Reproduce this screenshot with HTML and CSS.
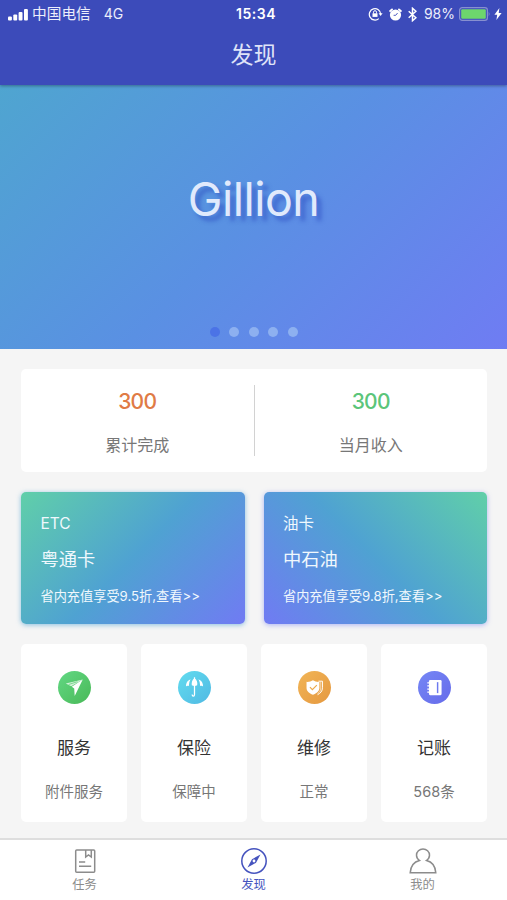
FILE: index.html
```html
<!DOCTYPE html>
<html lang="zh-CN">
<head>
  <meta charset="UTF-8">
  <meta name="viewport" content="width=device-width, initial-scale=1.0">
  <title>发现</title>
  <link rel="stylesheet" href="styles.css">
</head>
<body>

  <header>
    <div class="status-bar">
      <div class="status-left">
        <svg class="signal" width="21" height="13" viewBox="0 0 21 13" fill="#fff">
          <rect x="0" y="8.5" width="3.9" height="4" rx="1"/>
          <rect x="5.3" y="6.5" width="3.9" height="6" rx="1"/>
          <rect x="10.6" y="4" width="3.9" height="8.5" rx="1"/>
          <rect x="16" y="1" width="3.9" height="11.5" rx="1"/>
        </svg>
        <span class="carrier">中国电信</span>
        <span class="network">4G</span>
      </div>
      <div class="time">15:34</div>
      <div class="status-right">
        <svg class="lock" width="15" height="14" viewBox="0 0 15 14" fill="none" stroke="#fff" stroke-width="1.2">
          <path d="M10.8 11.6A5.7 5.7 0 1 1 12.7 7"/>
          <path d="M10.6 6.2h4l-2 2.800z" fill="#fff" stroke="none"/>
          <rect x="4.5" y="6.3" width="5" height="3.6" fill="#fff" stroke="none"/>
          <path d="M5.5 6.5V5.2a1.5 1.5 0 0 1 3 0v1.3" stroke-width="1"/>
        </svg>
        <svg class="alarm" width="13" height="13" viewBox="0 0 13 13">
          <circle cx="6.5" cy="7" r="5.6" fill="#fff"/>
          <path d="M1.200 3L3 1.400M11.800 3L10 1.400" stroke="#fff" stroke-width="1.9" stroke-linecap="round"/>
          <path d="M6.700 7.300L8.600 5M6.700 7.300H4.600" stroke="#3c4bba" stroke-width=".9" fill="none"/>
        </svg>
        <svg class="bluetooth" width="9" height="15" viewBox="0 0 9 15" fill="none" stroke="#fff" stroke-width="1.5">
          <path d="M.7 4.2l7.200 6.500-3.400 3V1.300l3.400 3L.7 10.800"/>
        </svg>
        <span class="percent">98%</span>
        <svg class="battery" width="32" height="14" viewBox="0 0 32 14">
          <rect x=".6" y=".6" width="27.8" height="12.8" rx="2.6" fill="none" stroke="#8790d0" stroke-width="1.2"/>
          <rect x="2.2" y="2.2" width="24.6" height="9.6" rx="1" fill="#6dd66d"/>
          <path d="M29.7 4.6q1.8 2.4 0 4.8z" fill="#8790d0"/>
        </svg>
        <svg class="bolt" width="8" height="12" viewBox="0 0 8 12" fill="#fff">
          <path d="M5.400 0L.4 6.700h2.800L2.400 12l5.200-7H4.700z"/>
        </svg>
      </div>
    </div>
    <h1>发现</h1>
  </header>

  <div class="banner">
    <div class="banner-title">Gillion</div>
    <div class="dots">
      <span class="dot active"></span>
      <span class="dot"></span>
      <span class="dot"></span>
      <span class="dot"></span>
      <span class="dot"></span>
    </div>
  </div>

  <main>
    <section class="stats">
      <div class="stat">
        <div class="stat-number orange">300</div>
        <div class="stat-label">累计完成</div>
      </div>
      <div class="stat">
        <div class="stat-number green">300</div>
        <div class="stat-label">当月收入</div>
      </div>
    </section>

    <section class="cards">
      <div class="card card-etc">
        <div class="card-type">ETC</div>
        <div class="card-name">粤通卡</div>
        <div class="card-desc">省内充值享受9.5折,查看&gt;&gt;</div>
      </div>
      <div class="card card-oil">
        <div class="card-type">油卡</div>
        <div class="card-name">中石油</div>
        <div class="card-desc">省内充值享受9.8折,查看&gt;&gt;</div>
      </div>
    </section>

    <section class="services">
      <div class="service">
        <div class="service-icon icon-green">
          <svg width="33" height="33" viewBox="0 0 34 34">
            <path d="M25.500 8.800L8 12.800l5.600 2.900z" fill="#fff" opacity=".75"/>
            <path d="M25.500 8.800L14.200 16.300l2.500 1.700.5 7.700z" fill="#fff"/>
            <path d="M11 13.900l9-2.900" stroke="#52c96c" stroke-width=".7"/>
          </svg>
        </div>
        <div class="service-name">服务</div>
        <div class="service-desc">附件服务</div>
      </div>
      <div class="service">
        <div class="service-icon icon-cyan">
          <svg width="33" height="33" viewBox="0 0 34 34" fill="#fff">
            <path d="M12.900 8.500C9.700 9.800 8 12.600 8.200 16q1-1.300 2.900-.5.100-4.200 1.800-7z"/>
            <path d="M21.100 8.500c3.200 1.300 4.900 4.100 4.700 7.500q-1-1.300-2.900-.5-.1-4.200-1.800-7z"/>
            <path d="M17 7.500c-2.500 1.400-3.200 4.400-2.800 7.200q2.800 1.500 5.600 0c.4-2.800-.3-5.800-2.800-7.200z"/>
            <path d="M17 6.500v17.800q0 1.600-1.200 1.600t-1.200-1.700" fill="none" stroke="#fff" stroke-width="1.3"/>
          </svg>
        </div>
        <div class="service-name">保险</div>
        <div class="service-desc">保障中</div>
      </div>
      <div class="service">
        <div class="service-icon icon-orange">
          <svg width="33" height="33" viewBox="0 0 34 34">
            <path d="M15.400 9.500q3 2 6.600 1.700v6.300c0 3.200-2.600 5.300-6.600 7-4-1.700-6.600-3.800-6.600-7v-6.300q3.600.3 6.600-1.700z" fill="#fff"/>
            <path d="M12.300 16.600l2.500 2.600 4.600-4.700" fill="none" stroke="#edaa4c" stroke-width="1.2"/>
            <path d="M21 10.500h4.200v6.800c0 3.500-2.200 5.700-5 7.100" fill="none" stroke="#fff" stroke-width="1"/>
            <path d="M23.400 11v6.500c0 2.800-1.400 4.700-3.400 6" fill="none" stroke="#fff" stroke-width=".8" opacity=".7"/>
          </svg>
        </div>
        <div class="service-name">维修</div>
        <div class="service-desc">正常</div>
      </div>
      <div class="service">
        <div class="service-icon icon-purple">
          <svg width="33" height="33" viewBox="0 0 34 34">
            <rect x="11.3" y="9.3" width="13" height="15.6" rx="1.2" fill="#fff"/>
            <path d="M9.600 12.200h3M9.600 15.400h3M9.600 18.600h3M9.600 21.800h3" stroke="#fff" stroke-width="1.3"/>
            <path d="M20.200 11.500v11.300" stroke="#6c79ef" stroke-width="1.5"/>
          </svg>
        </div>
        <div class="service-name">记账</div>
        <div class="service-desc">568条</div>
      </div>
    </section>
  </main>

  <nav class="tab-bar">
    <a class="tab" href="#">
      <svg width="28" height="28" viewBox="0 0 28 28" fill="none" stroke="#8c8c8c" stroke-width="1.5">
        <rect x="4.7" y="3" width="19" height="22.200" rx="1"/>
        <path d="M14.700 3v7l2.800-2 2.800 2V3M8 15h6.200M8 19.300h12.200"/>
      </svg>
      <span>任务</span>
    </a>
    <a class="tab active" href="#">
      <svg width="28" height="28" viewBox="0 0 28 28" fill="none" stroke="#4553be" stroke-width="1.5">
        <circle cx="14" cy="14" r="12.2"/>
        <path d="M20.500 7.500l-4.500 8.300-8.500 4.700 4.500-8.300z" fill="#4553be" stroke="none"/>
        <circle cx="14" cy="14" r="1.400" fill="#fff" stroke="none"/>
      </svg>
      <span>发现</span>
    </a>
    <a class="tab" href="#">
      <svg width="28" height="28" viewBox="0 0 28 28" fill="none" stroke="#8c8c8c" stroke-width="1.500">
        <path d="M10.500 13.500C8.500 12 7.500 10.500 7.500 8.200a6.500 6.200 0 0 1 13 0c0 2.300-1 3.800-3 5.300 5.500 1.300 8.800 5.500 9.300 12.200H1.200c.5-6.700 3.800-10.900 9.300-12.200z"/>
      </svg>
      <span>我的</span>
    </a>
  </nav>

</body>
</html>
```
FILE: styles.css
```css
* {
  box-sizing: border-box;
}

body {
  margin: 0;
  height: 900px;
  display: flex;
  flex-direction: column;
  overflow: hidden;
  font-family: "Liberation Sans", "Noto Sans CJK SC", sans-serif;
  background-color: #f5f5f5;
}

header {
  position: relative;
  height: 85px;
  background-color: #3c4bba;
  color: #fff;
  box-shadow: 0 1px 3px rgba(0, 0, 0, 0.35);
}

.status-bar {
  height: 28px;
  padding: 0 5px 0 8px;
  display: grid;
  grid-template-columns: 1fr auto 1fr;
  align-items: center;
  font-family: Inter, "Noto Sans CJK SC", sans-serif;
  font-size: 14px;
  line-height: 28px;
  color: #eceefb;
}

.status-left,
.status-right {
  display: flex;
  align-items: center;
}

.status-right {
  justify-content: flex-end;
}

.carrier {
  margin-left: 3px;
  font-size: 14.7px;
}

.network {
  margin-left: 13px;
}

.time {
  padding-left: 2px;
  color: #fff;
  font-weight: 600;
  letter-spacing: 0.5px;
}

.alarm {
  margin-left: 6px;
}

.bluetooth {
  margin-left: 6px;
}

.percent {
  margin-left: 7px;
}

.battery {
  margin-left: 4px;
}

.bolt {
  margin-left: 3px;
}

h1 {
  margin: 0;
  line-height: 55px;
  font-size: 23px;
  font-weight: 400;
  text-align: center;
  color: #dfe3f8;
}

.banner {
  height: 264px;
  padding-bottom: 12px;
  display: flex;
  flex-direction: column;
  justify-content: space-between;
  align-items: center;
  background: linear-gradient(135deg, #4fa5d0 0%, #5a90e3 50%, #6f7cf3 100%);
}

.banner-title {
  margin-top: 84px;
  font-family: Inter, sans-serif;
  font-size: 46.5px;
  font-weight: 400;
  letter-spacing: -0.5px;
  line-height: 60px;
  color: #e0eafc;
  text-shadow: 5px 5px 4px rgba(40, 70, 190, 0.55);
}

.dots {
  display: flex;
  gap: 9.5px;
}

.dot {
  width: 10px;
  height: 10px;
  border-radius: 50%;
  background-color: #8db0f0;
}

.dot.active {
  background-color: #4b73e6;
}

main {
  flex: 1;
  padding: 20px 20px 0 21px;
}

.stats {
  height: 103px;
  padding: 16px 0;
  display: flex;
  background-color: #fff;
  border-radius: 5px;
}

.stat {
  flex: 1;
  text-align: center;
}

.stat + .stat {
  border-left: 1px solid #d2d2d2;
}

.stat-number {
  font-family: Inter, sans-serif;
  font-size: 21px;
  font-weight: 500;
  letter-spacing: -0.7px;
  line-height: 33px;
}

.orange {
  color: #e07b45;
}

.green {
  color: #5bc57a;
}

.stat-label {
  margin-top: 16px;
  font-size: 16px;
  line-height: 24px;
  color: #777;
}

.cards {
  margin-top: 20px;
  display: grid;
  grid-template-columns: 1fr 1fr;
  gap: 19px;
}

.card {
  height: 132px;
  padding: 19px 19px 0 19.5px;
  border-radius: 5px;
  font-family: Inter, "Noto Sans CJK SC", sans-serif;
  color: #f0f8fd;
  white-space: nowrap;
}

.card-etc {
  background: linear-gradient(135deg, #60cfa9 0%, #4fa2d2 50%, #707bf3 100%);
  box-shadow: 0 1px 5px rgba(79, 162, 210, 0.65);
}

.card-oil {
  background: linear-gradient(45deg, #707bf3 0%, #4fa2d2 50%, #60cfa9 100%);
  box-shadow: 0 1px 5px rgba(112, 123, 243, 0.55);
}

.card-type {
  font-size: 15.5px;
  line-height: 26px;
}

.card-name {
  margin-top: 7px;
  font-size: 18.3px;
  line-height: 30px;
}

.card-desc {
  margin-top: 11px;
  font-size: 13.2px;
  line-height: 22px;
}

.services {
  margin-top: 20px;
  display: grid;
  grid-template-columns: repeat(4, 1fr);
  gap: 14px;
}

.service {
  height: 178px;
  padding-top: 27px;
  display: flex;
  flex-direction: column;
  align-items: center;
  background-color: #fff;
  border-radius: 5px;
}

.service-icon {
  width: 33px;
  height: 33px;
  border-radius: 50%;
}

.service-icon svg {
  display: block;
}

.icon-green {
  background: linear-gradient(135deg, #62d884, #49b957);
}

.icon-cyan {
  background: linear-gradient(135deg, #62dcef, #50b9e3);
}

.icon-orange {
  background: linear-gradient(135deg, #f1b557, #e5983f);
}

.icon-purple {
  background: linear-gradient(135deg, #7587f5, #666bea);
}

.service-name {
  margin-top: 31px;
  font-size: 17px;
  line-height: 28px;
  color: #333;
}

.service-desc {
  margin-top: 18px;
  font-family: Inter, "Noto Sans CJK SC", sans-serif;
  font-size: 14.5px;
  line-height: 22px;
  color: #777;
}

.tab-bar {
  height: 62px;
  display: flex;
  background-color: #fff;
  border-top: 2px solid #dedede;
}

.tab {
  flex: 1;
  padding-top: 7px;
  display: flex;
  flex-direction: column;
  align-items: center;
  font-size: 12.3px;
  line-height: 21px;
  color: #8c8c8c;
  text-decoration: none;
}

.tab.active {
  color: #4553be;
}
```
